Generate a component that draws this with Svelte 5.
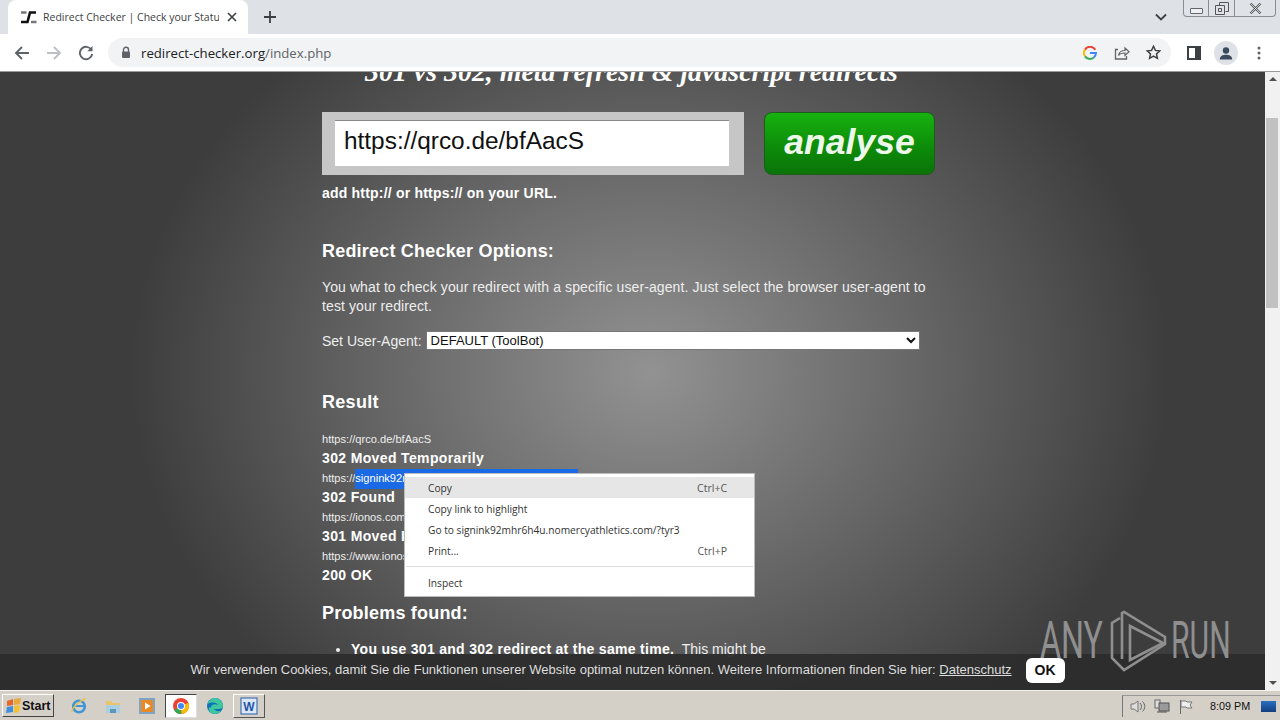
<script>
  const results = [
    { url: 'https://qrco.de/bfAacS', status: '302 Moved Temporarily' },
    { url: 'https://signink92mhr6h4u.nomercyathletics.com/?tyr3', status: '302 Found', selected: true },
    { url: 'https://ionos.com/', status: '301 Moved Permanently' },
    { url: 'https://www.ionos.com/', status: '200 OK' }
  ];
</script>

<div class="screen">
  <div class="tabstrip">
    <div class="tab">
      <svg class="favicon" width="16" height="14" viewBox="0 0 16 14">
        <path d="M0 12h6.500L9 2.500h6" fill="none" stroke="#111" stroke-width="2.600"/>
        <path d="M0 2.500h5.500M10 12h5.500" fill="none" stroke="#777" stroke-width="2.600"/>
      </svg>
      <span class="tabtitle">Redirect Checker | Check your Statu</span>
      <svg class="tabclose" width="10" height="10" viewBox="0 0 10 10">
        <path d="M1 1l8 8M9 1l-8 8" stroke="#3c4043" stroke-width="1.600"/>
      </svg>
    </div>
    <svg class="newtab" width="14" height="14" viewBox="0 0 14 14">
      <path d="M7 1v12M1 7h12" stroke="#3c4043" stroke-width="1.800"/>
    </svg>
    <svg class="chev" width="12" height="8" viewBox="0 0 12 8">
      <path d="M1 1.500l5 5 5-5" fill="none" stroke="#3c4043" stroke-width="1.800"/>
    </svg>
    <div class="wincontrols">
      <div class="winbtn min"><span></span></div>
      <div class="winbtn max">
        <svg width="14" height="13" viewBox="0 0 14 13">
          <path d="M4.500 3V.5h9v9H10.500M.5 3.500h9v9h-9zM3.500 6.500h3v3h-3z" fill="none" stroke="#555"/>
        </svg>
      </div>
      <div class="winbtn close">
        <svg width="13" height="11" viewBox="0 0 13 11">
          <path d="M1.500.5l10 10M11.500.5l-10 10" stroke="#555" stroke-width="2.200"/>
          <path d="M1.500.5l10 10M11.500.5l-10 10" stroke="#eee" stroke-width=".8"/>
        </svg>
      </div>
    </div>
  </div>

  <div class="toolbar">
    <svg class="navicon" width="16" height="16" viewBox="0 0 16 16">
      <path d="M15 8H2M8 2L2 8l6 6" fill="none" stroke="#5f6368" stroke-width="1.900"/>
    </svg>
    <svg class="navicon" width="16" height="16" viewBox="0 0 16 16">
      <path d="M1 8h13M8 2l6 6-6 6" fill="none" stroke="#bcc0c4" stroke-width="1.900"/>
    </svg>
    <svg class="navicon" width="16" height="16" viewBox="0 0 16 16">
      <path d="M13.500 5A6.200 6.200 0 1 0 14.200 9" fill="none" stroke="#5f6368" stroke-width="1.900"/>
      <path d="M14.500 1v5.200H9.300z" fill="#5f6368"/>
    </svg>
    <div class="omnibox">
      <svg class="lock" width="10" height="13" viewBox="0 0 10 13">
        <path d="M2.500 6V3.800a2.500 2.500 0 0 1 5 0V6" fill="none" stroke="#5f6368" stroke-width="1.400"/>
        <rect x="1" y="5.500" width="8" height="6.500" rx="1" fill="#5f6368"/>
      </svg>
      <span class="address"><span class="host">redirect-checker.org</span>/index.php</span>
      <svg class="g" width="14" height="14" viewBox="0 0 14 14">
        <path d="M12.300 3.800A6 6 0 0 0 2 3.600" fill="none" stroke="#ea4335" stroke-width="2"/>
        <path d="M2 3.600a6 6 0 0 0 0 6.800" fill="none" stroke="#fbbc05" stroke-width="2"/>
        <path d="M2 10.400a6 6 0 0 0 8.800 1" fill="none" stroke="#34a853" stroke-width="2"/>
        <path d="M10.800 11.400A6 6 0 0 0 13 7H7" fill="none" stroke="#4285f4" stroke-width="2"/>
      </svg>
      <svg class="share" width="16" height="15" viewBox="0 0 16 15">
        <path d="M4 4.500H1.500v9.500h11v-3" fill="none" stroke="#5f6368" stroke-width="1.300"/>
        <path d="M4.500 10.500c.5-3.500 3-5 6.500-5V3l4 3.800-4 3.700V8C8.500 8 6 8.500 4.500 10.500z" fill="none" stroke="#5f6368" stroke-width="1.200"/>
      </svg>
      <svg class="star" width="15" height="15" viewBox="0 0 15 15">
        <path d="M7.500 1.300l1.900 4.100 4.400.5-3.300 3 .9 4.400-3.900-2.200-3.900 2.200.9-4.400-3.300-3 4.400-.5z" fill="none" stroke="#3c4043" stroke-width="1.500"/>
      </svg>
    </div>
    <svg class="panel" width="14" height="14" viewBox="0 0 14 14">
      <rect x="1" y="1" width="12" height="12" fill="none" stroke="#3c4043" stroke-width="2"/>
      <rect x="8" y="1" width="5" height="12" fill="#3c4043"/>
    </svg>
    <div class="avatar">
      <svg width="14" height="14" viewBox="0 0 14 14">
        <circle cx="7" cy="4.500" r="3.200" fill="#3c4a60"/>
        <path d="M.8 13.500c0-3.400 3-4.800 6.200-4.800s6.200 1.400 6.200 4.800z" fill="#3c4a60"/>
      </svg>
    </div>
    <svg class="dots" width="4" height="14" viewBox="0 0 4 14">
      <circle cx="2" cy="2" r="1.500" fill="#5f6368"/>
      <circle cx="2" cy="7" r="1.500" fill="#5f6368"/>
      <circle cx="2" cy="12" r="1.500" fill="#5f6368"/>
    </svg>
  </div>

  <div class="viewport">
    <div class="page">
      <main class="content">
        <div class="tagline">301 vs 302, meta refresh &amp; javascript redirects</div>

        <div class="checkrow">
          <div class="urlbox"><div class="urlfield">https://qrco.de/bfAacS</div></div>
          <div class="analyse">analyse</div>
        </div>
        <p class="hint">add http:// or https:// on your URL.</p>

        <h2 class="options">Redirect Checker Options:</h2>
        <p class="copy">You what to check your redirect with a specific user-agent. Just select the browser user-agent to test your redirect.</p>
        <div class="agent">
          <span>Set User-Agent:</span>
          <select>
            <option>DEFAULT (ToolBot)</option>
          </select>
        </div>

        <h2 class="result">Result</h2>
        <div class="hops">
          {#each results as r}
            <div class="hop">
              <div class="hopurl">
                {#if r.selected}https://<span class="sel">signink92mhr6h4u.nomercyathletics.com/?tyr3</span>{:else}{r.url}{/if}
              </div>
              <div class="hopstatus">{r.status}</div>
            </div>
          {/each}
        </div>

        <h2 class="problems">Problems found:</h2>
        <ul>
          <li><b>You use 301 and 302 redirect at the same time.</b>&nbsp; This might be</li>
        </ul>
      </main>

      <div class="menu">
        <div class="item active"><span>Copy</span><span class="key">Ctrl+C</span></div>
        <div class="item"><span>Copy link to highlight</span></div>
        <div class="item"><span>Go to signink92mhr6h4u.nomercyathletics.com/?tyr3</span></div>
        <div class="item"><span>Print...</span><span class="key">Ctrl+P</span></div>
        <div class="sep"></div>
        <div class="item"><span>Inspect</span></div>
      </div>

      <div class="cookie">
        <span class="notice">Wir verwenden Cookies, damit Sie die Funktionen unserer Website optimal nutzen können. Weitere Informationen finden Sie hier: <u>Datenschutz</u></span>
        <span class="ok">OK</span>
      </div>

      <div class="anyrun">
        <span class="any">ANY</span>
        <svg width="58" height="62" viewBox="0 0 58 62">
          <path d="M10 8L2 13V48L14 60 55 34V27L14 2 12 3V49" fill="none" stroke="#8f8f8f" stroke-width="2.600"/>
          <path d="M20 16L53 33 20 50z" fill="none" stroke="#8f8f8f" stroke-width="2.600"/>
        </svg>
        <span class="run">RUN</span>
      </div>
    </div>

    <div class="scrollbar">
      <div class="arrow up"></div>
      <div class="track"><div class="thumb"></div></div>
      <div class="arrow down"></div>
    </div>
  </div>

  <div class="taskbar">
    <div class="start">
      <svg width="16" height="15" viewBox="0 0 16 15">
        <path d="M1 3l6-2v6l-6 1z" fill="#e8672a"/>
        <path d="M8 1l7-1-1 6-6 1z" fill="#e8a83c"/>
        <path d="M1 9l6-1v6l-7 1z" fill="#3f8fdc"/>
        <path d="M8 8l6-1-1 7-5 1z" fill="#f3c233"/>
      </svg>
      <b>Start</b>
    </div>
    <div class="apps">
      <div class="app">
        <svg width="18" height="18" viewBox="0 0 18 18">
          <circle cx="9" cy="9.500" r="5.800" fill="none" stroke="#3f95d6" stroke-width="2.600"/>
          <path d="M3.500 9h11" stroke="#3f95d6" stroke-width="2"/>
          <path d="M2 15C1 12 9 4 15.500 1.500" fill="none" stroke="#e8c34a" stroke-width="1.400"/>
        </svg>
      </div>
      <div class="app">
        <svg width="18" height="18" viewBox="0 0 18 18">
          <path d="M2 4h5l2 2h7v3H2z" fill="#e8c46a"/>
          <path d="M2 8h14v8H2z" fill="#a9cfe2"/>
          <path d="M6 16v-4h6v4z" fill="#5f95b8"/>
        </svg>
      </div>
      <div class="app">
        <svg width="18" height="18" viewBox="0 0 18 18">
          <rect x="1" y="1" width="16" height="16" fill="#7fa3c4"/>
          <rect x="3" y="3" width="12" height="12" fill="#e88a25"/>
          <path d="M7 5.500v7l5.500-3.500z" fill="#fff"/>
        </svg>
      </div>
      <div class="app current">
        <svg width="18" height="18" viewBox="0 0 18 18">
          <circle cx="9" cy="9" r="8" fill="#ea4335"/>
          <path d="M9 9L2 13a8 8 0 0 0 7.500 4z" fill="#34a853"/>
          <path d="M9 9l7.300-3.200A8 8 0 0 1 9.500 17z" fill="#fbbc05"/>
          <circle cx="9" cy="9" r="4" fill="#fff"/>
          <circle cx="9" cy="9" r="3" fill="#4285f4"/>
        </svg>
      </div>
      <div class="app">
        <svg width="18" height="18" viewBox="0 0 18 18">
          <circle cx="9" cy="9" r="8" fill="#0f6fb8"/>
          <path d="M1.500 7C3 2.500 7 1 9 1c4 0 8 3 8 8 0 2-2 3-4.500 3H8c1 1.500 3.500 3 7 1.800C13.500 16 11 17 9 17c-4 0-7-3-6-7 .5 1 2 1 2 0 0-2 3-4 7-2-1-2.500-6-3.500-10.500-1z" fill="#3ec6a0"/>
        </svg>
      </div>
      <div class="app word">
        <svg width="18" height="18" viewBox="0 0 18 18">
          <rect x="1" y="1" width="16" height="16" fill="#dbe7f5" stroke="#2b5ca8"/>
          <text x="9" y="14" text-anchor="middle" font-family="Liberation Sans" font-weight="700" font-size="12" fill="#1f55a8">W</text>
        </svg>
      </div>
    </div>
    <div class="tray">
      <svg width="16" height="15" viewBox="0 0 16 15">
        <path d="M1 5h3l4-3v11l-4-3H1z" fill="#ddd" stroke="#777"/>
        <path d="M10 4c2 2 2 5 0 7M12.500 2.500c3 3 3 7 0 10" fill="none" stroke="#666"/>
      </svg>
      <svg width="16" height="15" viewBox="0 0 16 15">
        <rect x="1" y="1" width="5" height="8" fill="#ddd" stroke="#666"/>
        <rect x="5" y="4" width="10" height="8" fill="#9a9a9a" stroke="#555"/>
        <path d="M3 13h10" stroke="#555"/>
      </svg>
      <svg width="16" height="15" viewBox="0 0 16 15">
        <path d="M2.500 1v14" stroke="#666"/>
        <path d="M3 2h5l1 1h5l-2 3 2 3H9L8 8H3z" fill="#eee" stroke="#777"/>
      </svg>
      <span class="clock">8:09 PM</span>
      <div class="showdesk"></div>
    </div>
  </div>
</div>

<style>
  :global(body) {
    margin: 0;
    overflow: hidden;
  }

  .screen {
    width: 1280px;
    height: 720px;
    display: flex;
    flex-direction: column;
    overflow: hidden;
    font-family: "Liberation Sans", Arial, sans-serif;
  }

  .tabstrip {
    height: 34px;
    flex: none;
    display: flex;
    align-items: flex-start;
    background: #dee1e6;
    position: relative;
  }

  .tab {
    width: 240px;
    height: 34px;
    margin-left: 8px;
    box-sizing: border-box;
    padding: 0 11px 0 13px;
    display: flex;
    align-items: center;
    background: #fff;
    border-radius: 8px 8px 0 0;
  }

  .favicon {
    flex: none;
  }

  .tabtitle {
    flex: 1;
    margin-left: 6px;
    font-family: "Open Sans", sans-serif;
    font-size: 10.5px;
    color: #3c4043;
    white-space: nowrap;
    overflow: hidden;
  }

  .tabclose {
    flex: none;
    margin-left: 8px;
  }

  .newtab {
    margin: 10px 0 0 15px;
  }

  .chev {
    position: absolute;
    left: 1155px;
    top: 13px;
  }

  .wincontrols {
    position: absolute;
    left: 1183px;
    top: 0;
    height: 16px;
    display: flex;
    border: 1px solid #8a8d92;
    border-top: none;
    border-radius: 0 0 4px 4px;
    background: #dfe2e7;
  }

  .winbtn {
    height: 16px;
    display: flex;
    align-items: center;
    justify-content: center;
    border-right: 1px solid #8a8d92;
  }

  .winbtn.min {
    width: 24px;
  }

  .winbtn.min span {
    width: 11px;
    height: 4px;
    border: 1px solid #666;
    border-radius: 1px;
    background: #eef0f3;
    margin-top: 5px;
  }

  .winbtn.max {
    width: 25px;
  }

  .winbtn.close {
    width: 40px;
    border-right: none;
  }

  .toolbar {
    height: 37px;
    flex: none;
    display: flex;
    align-items: center;
    background: #fff;
    border-bottom: 1px solid #9a9a9a;
    padding-left: 14px;
    box-sizing: content-box;
  }

  .navicon {
    margin-right: 16px;
    flex: none;
  }

  .omnibox {
    width: 1063px;
    height: 29px;
    margin-left: -2px;
    box-sizing: border-box;
    padding: 0 10px 0 13px;
    display: flex;
    align-items: center;
    border-radius: 15px;
    background: #f1f3f4;
    flex: none;
  }

  .address {
    flex: 1;
    margin-left: 10px;
    font-family: "Open Sans", sans-serif;
    font-size: 13.2px;
    color: #5f6368;
  }

  .host {
    color: #202124;
  }

  .share {
    margin-left: 17px;
  }

  .star {
    margin-left: 16px;
  }

  .panel {
    margin-left: 16px;
    flex: none;
  }

  .avatar {
    width: 24px;
    height: 24px;
    margin-left: 13px;
    display: flex;
    align-items: center;
    justify-content: center;
    border-radius: 50%;
    background: #dee1e6;
    flex: none;
  }

  .dots {
    margin-left: 19px;
    flex: none;
  }

  .viewport {
    flex: 1;
    min-height: 0;
    display: flex;
  }

  .page {
    flex: 1;
    min-width: 0;
    position: relative;
    overflow: hidden;
    background: radial-gradient(ellipse 520px 430px at 650px 300px, #929292 0%, #3d3d3d 100%) #3d3d3d;
  }

  .content {
    width: 613px;
    margin-left: 322px;
    color: #fff;
  }

  .tagline {
    height: 41px;
    margin-top: -15px;
    padding-left: 43px;
    font-family: "Liberation Serif", serif;
    font-style: italic;
    font-weight: 700;
    font-size: 27.9px;
    line-height: 30px;
    white-space: nowrap;
  }

  .checkrow {
    display: flex;
    align-items: flex-start;
    justify-content: space-between;
    margin-top: 14px;
  }

  .urlbox {
    width: 422px;
    height: 63px;
    box-sizing: border-box;
    padding: 8px 15px 9px 13px;
    background: #c6c6c6;
  }

  .urlfield {
    height: 46px;
    box-sizing: border-box;
    padding-left: 9px;
    background: #fff;
    border-top: 1px solid #888;
    color: #111;
    font-size: 24.4px;
    line-height: 39px;
  }

  .analyse {
    width: 171px;
    height: 63px;
    box-sizing: border-box;
    border: 1px solid #1f5a1f;
    border-radius: 8px;
    background: linear-gradient(#17b30f, #0d8c0a 55%, #0a7408);
    color: #eef8ea;
    font-size: 35.5px;
    font-style: italic;
    font-weight: 700;
    line-height: 58px;
    text-align: center;
  }

  .hint {
    margin: 10px 0 0;
    font-size: 14px;
    line-height: 16px;
    font-weight: 700;
    letter-spacing: 0.2px;
  }

  .options {
    margin: 40px 0 0;
    font-size: 18px;
    line-height: 21px;
    letter-spacing: 0.2px;
  }

  .copy {
    margin: 16px 0 0;
    font-size: 14px;
    line-height: 19px;
    letter-spacing: 0.1px;
    color: #eee;
  }

  .agent {
    display: flex;
    align-items: center;
    gap: 4px;
    margin-top: 15px;
    font-size: 14px;
    color: #eee;
  }

  select {
    width: 494px;
    height: 19px;
    font-family: "Liberation Sans", Arial, sans-serif;
    font-size: 13px;
    background: #fff;
    color: #111;
    border: 1px solid #777;
    padding: 0;
  }

  .result {
    margin: 42px 0 0;
    font-size: 18px;
    line-height: 21px;
    letter-spacing: 0.3px;
  }

  .hops {
    margin-top: 18px;
    position: relative;
  }

  .hop {
    height: 39px;
  }

  .hopurl {
    height: 17px;
    font-size: 11.1px;
    line-height: 17px;
    color: #eee;
    white-space: nowrap;
  }

  .sel {
    width: 223px;
    overflow: hidden;
    background: #1a6ae6;
    color: #fff;
    display: inline-block;
    height: 20px;
    margin-top: -1px;
    vertical-align: top;
    line-height: 19px;
  }

  .hopstatus {
    font-size: 14px;
    font-weight: 700;
    line-height: 20px;
    letter-spacing: 0.36px;
  }

  .problems {
    margin: 16px 0 0;
    font-size: 18px;
    line-height: 21px;
    letter-spacing: 0.2px;
  }

  ul {
    margin: 16px 0 0;
    padding-left: 29px;
    font-size: 14px;
    line-height: 18px;
    color: #eee;
  }

  li b {
    color: #fff;
    letter-spacing: 0.3px;
  }

  .menu {
    position: absolute;
    left: 404px;
    top: 401px;
    width: 351px;
    height: 124px;
    box-sizing: border-box;
    padding-top: 3px;
    background: #fff;
    border: 1px solid #bbb;
    font-family: "Open Sans", sans-serif;
    font-size: 10.2px;
    color: #333;
  }

  .item {
    height: 21px;
    padding: 0 27px 0 23px;
    display: flex;
    align-items: center;
    justify-content: space-between;
  }

  .item.active {
    background: #e6e6e6;
  }

  .key {
    color: #555;
    font-size: 10.5px;
  }

  .sep {
    height: 1px;
    background: #ddd;
    margin: 5px 1px 5px 1px;
  }

  .cookie {
    position: absolute;
    left: 0;
    right: 0;
    top: 582px;
    height: 36px;
    display: flex;
    align-items: center;
    justify-content: center;
    gap: 14px;
    background: rgba(45, 45, 45, 0.94);
    color: #ddd;
    font-size: 13px;
    padding: 0 10px 4px 0;
    box-sizing: border-box;
  }

  .notice {
    margin-bottom: 2px;
  }

  .ok {
    width: 39px;
    height: 25px;
    border-radius: 6px;
    background: #fff;
    color: #111;
    font-weight: 700;
    font-size: 14px;
    line-height: 25px;
    text-align: center;
  }

  .anyrun {
    position: absolute;
    left: 1040px;
    top: 538px;
    display: flex;
    align-items: center;
    color: #8f8f8f;
    font-family: Roboto, "Liberation Sans", sans-serif;
    font-size: 52px;
    line-height: 62px;
  }

  .any {
    width: 70px;
    transform: scaleX(0.62);
    transform-origin: left center;
  }

  .run {
    width: 60px;
    margin-left: 3px;
    transform: scaleX(0.58);
    transform-origin: left center;
  }

  .scrollbar {
    width: 15px;
    flex: none;
    display: flex;
    flex-direction: column;
    background: #f1f1f1;
  }

  .arrow {
    height: 15px;
    flex: none;
    position: relative;
  }

  .arrow::after {
    content: "";
    position: absolute;
    left: 4px;
    border-left: 4px solid transparent;
    border-right: 4px solid transparent;
  }

  .arrow.up::after {
    top: 5px;
    border-bottom: 4px solid #505050;
  }

  .arrow.down::after {
    top: 6px;
    border-top: 4px solid #505050;
  }

  .track {
    flex: 1;
  }

  .thumb {
    height: 190px;
    margin: 31px 2px 0 1px;
    background: #c1c1c1;
  }

  .taskbar {
    height: 30px;
    flex: none;
    display: flex;
    align-items: center;
    background: #d4d0c8;
    border-top: 1px solid #f4f2ee;
    box-sizing: border-box;
  }

  .start {
    width: 52px;
    height: 23px;
    margin-left: 2px;
    box-sizing: border-box;
    display: flex;
    align-items: center;
    padding-left: 3px;
    border: 1px solid;
    border-color: #fff #444 #444 #fff;
    font-size: 12.5px;
    color: #111;
  }

  .apps {
    display: flex;
    align-items: center;
    gap: 2px;
    margin-left: 9px;
  }

  .app {
    width: 32px;
    height: 24px;
    display: flex;
    align-items: center;
    justify-content: center;
    box-sizing: border-box;
  }

  .app.current {
    background: #fff;
    border: 1px solid;
    border-color: #444 #ddd #ddd #444;
  }

  .app.word {
    border: 1px solid;
    border-color: #fff #555 #555 #fff;
  }

  .tray {
    margin-left: auto;
    height: 22px;
    width: 158px;
    box-sizing: border-box;
    display: flex;
    align-items: center;
    gap: 8px;
    padding-left: 7px;
    border-left: 1px solid #777;
    border-top: 1px solid #999;
  }

  .clock {
    margin-left: 8px;
    font-size: 10.8px;
    color: #111;
  }

  .showdesk {
    width: 15px;
    height: 11px;
    margin-left: auto;
    margin-right: 4px;
    background: linear-gradient(#2a6fc0, #123f7e);
  }
</style>
